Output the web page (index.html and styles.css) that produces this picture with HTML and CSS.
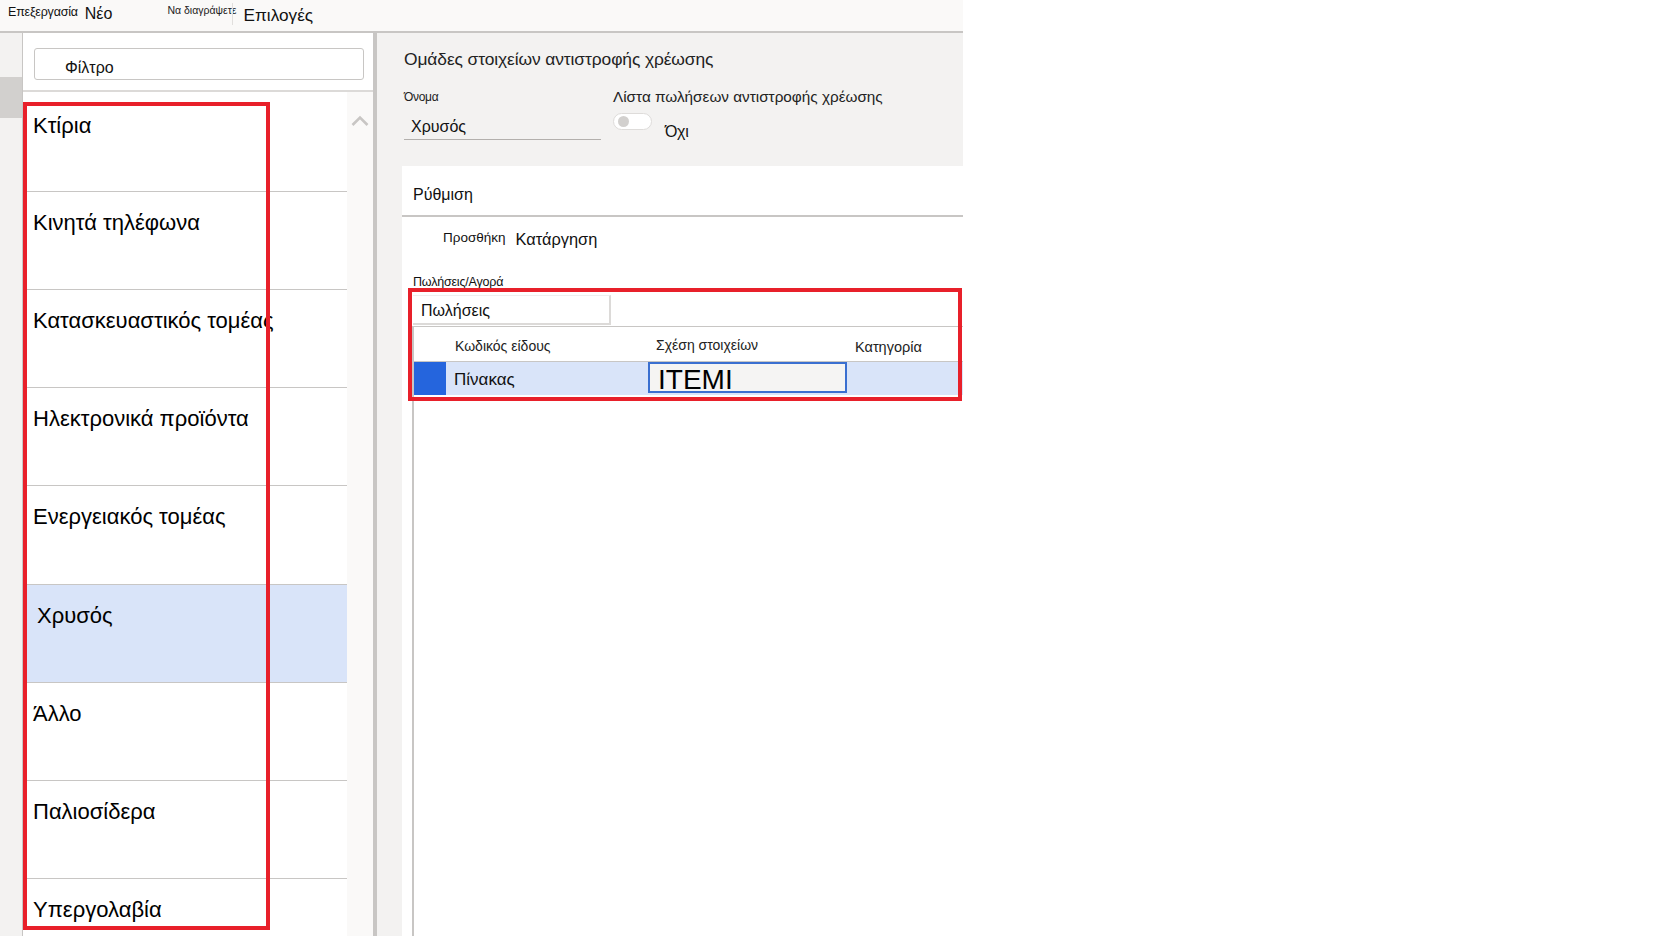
FILE: index.html
```html
<!DOCTYPE html>
<html lang="el">
<head>
<meta charset="utf-8">
<title>Ομάδες στοιχείων αντιστροφής χρέωσης</title>
<link rel="stylesheet" href="styles.css">
</head>
<body>
<div class="app">
  <header class="topbar">
    <span class="tb-small">Επεξεργασία</span>
    <span class="tb-new">Νέο</span>
    <span class="tb-del">Να διαγράψετε</span>
    <span class="tb-sep"></span>
    <span class="tb-opt">Επιλογές</span>
  </header>
  <div class="body">
    <nav class="rail"><div class="rail-active"></div></nav>
    <aside class="leftpanel">
      <div class="filter-area">
        <div class="filter">Φίλτρο</div>
      </div>
      <div class="list-wrap">
        <ul class="list">
          <li class="item">Κτίρια</li>
          <li class="item">Κινητά τηλέφωνα</li>
          <li class="item">Κατασκευαστικός τομέας</li>
          <li class="item">Ηλεκτρονικά προϊόντα</li>
          <li class="item">Ενεργειακός τομέας</li>
          <li class="item selected">Χρυσός</li>
          <li class="item">Άλλο</li>
          <li class="item">Παλιοσίδερα</li>
          <li class="item">Υπεργολαβία</li>
        </ul>
        <div class="scroll">
          <svg class="chev" width="18" height="12" viewBox="0 0 18 12"><path d="M1.5 10 L9 2.5 L16.5 10" fill="none" stroke="#c8c6c4" stroke-width="2.6"/></svg>
        </div>
      </div>
      <div class="redbox red-list"></div>
    </aside>
    <main class="main">
      <h1 class="title">Ομάδες στοιχείων αντιστροφής χρέωσης</h1>
      <div class="fields">
        <div class="field name-field">
          <div class="label-sm">Όνομα</div>
          <div class="name-input">Χρυσός</div>
        </div>
        <div class="field">
          <div class="label">Λίστα πωλήσεων αντιστροφής χρέωσης</div>
          <div class="toggle-row">
            <span class="toggle"><span class="knob"></span></span>
            <span class="toggle-text">Όχι</span>
          </div>
        </div>
      </div>
      <section class="card">
        <div class="card-head">Ρύθμιση</div>
        <div class="actions">
          <span class="act-add">Προσθήκη</span>
          <span class="act-remove">Κατάργηση</span>
        </div>
        <div class="sp-label">Πωλήσεις/Αγορά</div>
        <div class="sp-box">
          <div class="dropdown">Πωλήσεις</div>
        </div>
        <div class="grid">
          <div class="grow ghead">
            <div class="c-sel"></div>
            <div class="c-code">Κωδικός είδους</div>
            <div class="c-rel">Σχέση στοιχείων</div>
            <div class="c-cat">Κατηγορία</div>
          </div>
          <div class="grow grow-sel">
            <div class="c-sel"><span class="selmark"></span></div>
            <div class="c-code">Πίνακας</div>
            <div class="c-rel"><div class="cell-input">ITEMI</div></div>
            <div class="c-cat"></div>
          </div>
        </div>
        <div class="redbox red-grid"></div>
      </section>
    </main>
  </div>
</div>
</body>
</html>
```
FILE: styles.css
```css
* { box-sizing: border-box; }
html, body { margin: 0; padding: 0; }
body {
  background: #ffffff;
  font-family: "Liberation Sans", Arial, sans-serif;
  color: #000;
  width: 1675px;
  height: 936px;
  overflow: hidden;
}
.app {
  width: 963px;
  height: 936px;
  display: flex;
  flex-direction: column;
}
.topbar {
  height: 33px;
  background: #faf9f8;
  border-bottom: 2px solid #c8c6c4;
  display: flex;
  align-items: flex-start;
  padding-left: 8px;
  white-space: nowrap;
}
.tb-small { font-size: 12.5px; margin-top: 5px; letter-spacing: -0.2px; color: #111; }
.tb-new { font-size: 16px; margin-top: 5px; margin-left: 7px; color: #111; }
.tb-del { font-size: 10.5px; margin-top: 4px; margin-left: 55px; color: #222; }
.tb-sep { width: 1px; height: 22px; background: #e1dfdd; margin-left: -5px; margin-top: 3px; }
.tb-opt { font-size: 17.2px; margin-top: 5px; margin-left: 11px; color: #111; }

.body {
  flex: 1;
  display: flex;
  min-height: 0;
}
.rail {
  width: 23px;
  background: #f3f2f1;
  border-right: 1px solid #c8c6c4;
  padding-top: 44px;
}
.rail-active { height: 41px; background: #d2d0ce; }

.leftpanel {
  position: relative;
  width: 354px;
  background: #fff;
  border-right: 4px solid #c8c6c4;
  display: flex;
  flex-direction: column;
}
.filter-area {
  padding: 15px 9px 10px 11px;
  border-bottom: 2px solid #dcdad8;
}
.filter {
  height: 32px;
  border: 1.5px solid #c8c6c4;
  border-radius: 3px;
  font-size: 16px;
  line-height: 24px;
  padding: 7px 0 0 30px;
  color: #111;
  overflow: hidden;
}
.list-wrap {
  flex: 1;
  display: flex;
  min-height: 0;
  padding-left: 2px;
}
.list {
  list-style: none;
  margin: 0;
  padding: 3px 0 0;
  width: 322px;
}
.item {
  height: 98.1px;
  border-bottom: 1px solid #c8c6c4;
  font-size: 22px;
  line-height: 26px;
  padding: 18px 0 0 8px;
  color: #000;
  white-space: nowrap;
}
.item:first-child { height: 97.2px; }
.item.selected { background: #d9e4f9; padding-left: 12px; }
.scroll {
  flex: 1;
  background: #faf9f8;
  display: flex;
  justify-content: center;
  padding-top: 23px;
}
.chev { display: block; }

.redbox {
  position: absolute;
  border: 4px solid #e8202a;
  pointer-events: none;
}
.red-list { left: 0; top: 69px; width: 247px; height: 828px; }

.main {
  flex: 1;
  background: #f3f2f1;
  padding-left: 26px;
  display: flex;
  flex-direction: column;
  min-width: 0;
}
.title {
  margin: 14px 0 0 1px;
  font-size: 17.4px;
  font-weight: normal;
  line-height: 24px;
  color: #222;
  letter-spacing: -0.1px;
  white-space: nowrap;
}
.fields {
  display: flex;
  margin: 18px 0 0 1px;
  gap: 12px;
}
.name-field { width: 197px; }
.label-sm { font-size: 12px; line-height: 16px; color: #222; letter-spacing: -0.3px; }
.label { font-size: 15.3px; line-height: 16px; color: #222; white-space: nowrap; }
.name-input {
  height: 35px;
  border-bottom: 1px solid #b3b0ad;
  font-size: 16px;
  line-height: 20px;
  padding: 12px 0 0 7px;
  color: #111;
}
.toggle-row { display: flex; align-items: flex-start; margin-top: 8px; }
.toggle {
  width: 39px;
  height: 17px;
  border: 1px solid #dedcda;
  border-radius: 9px;
  background: #fff;
  display: flex;
  align-items: center;
  padding-left: 4px;
}
.knob { width: 11px; height: 11px; border-radius: 50%; background: #d2d0ce; }
.toggle-text { font-size: 16px; margin: 10px 0 0 13px; color: #111; letter-spacing: -0.3px; }

.card {
  position: relative;
  flex: 1;
  background: #fff;
  margin: 25px 0 0 -1px;
  display: flex;
  flex-direction: column;
}
.card-head {
  height: 51px;
  flex: none;
  border-bottom: 2px solid #c8c6c4;
  font-size: 16px;
  line-height: 20px;
  padding: 19px 0 0 11px;
  color: #111;
}
.actions {
  display: flex;
  align-items: flex-start;
  height: 32px;
  flex: none;
  padding: 12px 0 0 41px;
  white-space: nowrap;
  line-height: 20px;
}
.act-add { font-size: 13.5px; color: #111; margin-top: -1px; }
.act-remove { font-size: 16.4px; color: #111; margin-left: 10px; }
.sp-label {
  font-size: 12.5px;
  line-height: 14px;
  margin: 26px 0 0 11px;
  color: #111;
  letter-spacing: -0.2px;
}
.sp-box {
  margin: 3px 0 0 11px;
  height: 34px;
  flex: none;
  padding-top: 3px;
}
.dropdown {
  width: 198px;
  height: 30px;
  background: #fff;
  border-right: 2px solid #dcdad8;
  border-bottom: 2px solid #dcdad8;
  border-top: 1px solid #eeeeee;
  font-size: 16px;
  line-height: 30px;
  padding-left: 8px;
  color: #111;
}
.grid {
  flex: 1;
  margin-left: 10px;
  border-left: 2px solid #c8c6c4;
  border-top: 1px solid #c8c6c4;
}
.grow { display: flex; }
.ghead {
  height: 35px;
  border-bottom: 1px solid #c8c6c4;
  font-size: 14px;
  color: #222;
  align-items: center;
  padding-top: 4px;
}
.c-sel { width: 32px; flex: none; }
.c-code { width: 202px; padding-left: 9px; flex: none; }
.c-rel { width: 199px; padding-left: 8px; flex: none; }
.c-cat { flex: 1; padding-left: 8px; }
.ghead .c-rel { margin-top: -2px; }
.ghead .c-cat { margin-top: 2px; font-size: 14.5px; }
.grow-sel {
  height: 33px;
  background: #d9e4f9;
  align-items: stretch;
}
.grow-sel .c-sel { display: flex; }
.selmark { width: 32px; background: #2565dd; }
.grow-sel .c-code { font-size: 17px; line-height: 35px; padding-left: 8px; color: #111; }
.grow-sel .c-rel { padding: 0; }
.cell-input {
  width: 199px;
  height: 31px;
  border: 2px solid #3a6fd0;
  background: #f5f4f3;
  font-size: 28px;
  line-height: 31px;
  padding-left: 8px;
  color: #000;
}
.red-grid { left: 6px; top: 122px; right: 1px; height: 113px; }
```
